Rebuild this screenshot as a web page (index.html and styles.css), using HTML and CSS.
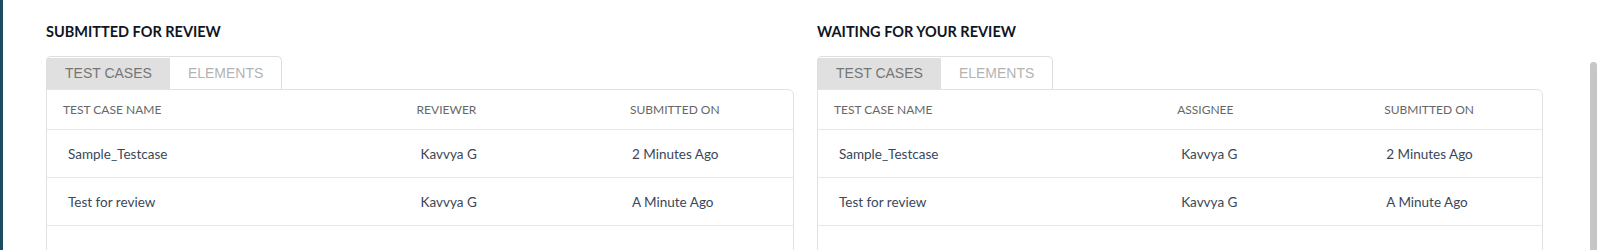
FILE: index.html
```html
<!DOCTYPE html>
<html lang="en">
<head>
  <meta charset="UTF-8">
  <meta name="viewport" content="width=device-width, initial-scale=1.0">
  <title>Reviews</title>
  <link rel="stylesheet" href="styles.css">
</head>
<body>

  <div class="page">
    <div class="review-panels">

      <div class="panel panel-left">
        <h3 class="panel-title">SUBMITTED FOR REVIEW</h3>
        <div class="tabs">
          <a href="javascript:;" class="tab active">TEST CASES</a>
          <a href="javascript:;" class="tab">ELEMENTS</a>
        </div>
        <div class="table-wrap">
          <table class="review-table">
            <colgroup>
              <col class="col-name">
              <col class="col-user">
              <col class="col-date">
            </colgroup>
            <thead>
              <tr>
                <th>TEST CASE NAME</th>
                <th>REVIEWER</th>
                <th>SUBMITTED ON</th>
              </tr>
            </thead>
            <tbody>
              <tr>
                <td>Sample_Testcase</td>
                <td>Kavvya G</td>
                <td>2 Minutes Ago</td>
              </tr>
              <tr>
                <td>Test for review</td>
                <td>Kavvya G</td>
                <td>A Minute Ago</td>
              </tr>
              <tr class="empty">
                <td></td><td></td><td></td>
              </tr>
            </tbody>
          </table>
        </div>
      </div>

      <div class="panel panel-right">
        <h3 class="panel-title">WAITING FOR YOUR REVIEW</h3>
        <div class="tabs">
          <a href="javascript:;" class="tab active">TEST CASES</a>
          <a href="javascript:;" class="tab">ELEMENTS</a>
        </div>
        <div class="table-wrap">
          <table class="review-table">
            <colgroup>
              <col class="col-name">
              <col class="col-user">
              <col class="col-date">
            </colgroup>
            <thead>
              <tr>
                <th>TEST CASE NAME</th>
                <th>ASSIGNEE</th>
                <th>SUBMITTED ON</th>
              </tr>
            </thead>
            <tbody>
              <tr>
                <td>Sample_Testcase</td>
                <td>Kavvya G</td>
                <td>2 Minutes Ago</td>
              </tr>
              <tr>
                <td>Test for review</td>
                <td>Kavvya G</td>
                <td>A Minute Ago</td>
              </tr>
              <tr class="empty">
                <td></td><td></td><td></td>
              </tr>
            </tbody>
          </table>
        </div>
      </div>

    </div>

    <!-- scrollbar thumb of the content area -->
    <div class="scroll-thumb"></div>
  </div>

</body>
</html>
```

FILE: styles.css
```css
html, body {
  margin: 0;
  padding: 0;
  height: 100%;
  overflow: hidden;
  background-color: #fff;
}
a {
  text-decoration: none;
}
.page {
  position: relative;
  height: 100%;
  border-left: 3px solid #1f4b60;
  box-sizing: border-box;
  font-family: Lato, "Open Sans", sans-serif;
}
.review-panels {
  display: flex;
  gap: 23px;
  padding: 22px 0 0 43px;
}
.panel-left {
  width: 748px;
}
.panel-right {
  width: 726px;
}
.panel-title {
  margin: 0 0 14px;
  font-size: 14.5px;
  line-height: 20px;
  font-weight: 700;
  color: #10151f;
}

/* tabs */
.tabs {
  display: inline-flex;
  padding-top: 1px;
  border: 1px solid #dedede;
  border-bottom: none;
  border-radius: 5px 5px 0 0;
  vertical-align: top;
}
.tab {
  display: block;
  height: 31px;
  padding: 0 18px;
  line-height: 31px;
  font-family: "Liberation Sans", Arial, sans-serif;
  font-size: 14px;
  color: #b3b3b3;
}
.tab.active {
  background-color: #e0e0e0;
  color: #757575;
}

/* table */
.table-wrap {
  border: 1px solid #e2e2e2;
  border-radius: 0 6px 0 0;
  overflow: hidden;
}
.review-table {
  width: 100%;
  border-collapse: collapse;
  table-layout: fixed;
}
.col-name {
  width: 47.4%;
}
.col-user {
  width: 28.6%;
}
.review-table th {
  height: 39px;
  padding: 0 0 0 16px;
  text-align: left;
  font-size: 12px;
  font-weight: 400;
  color: #676767;
  border-bottom: 1px solid #e6e6e6;
}
.review-table td {
  height: 47px;
  padding: 0 0 0 20px;
  font-size: 13.5px;
  color: #39475a;
  border-bottom: 1px solid #e6e6e6;
}
.review-table td:first-child {
  padding-left: 21px;
}
.review-table td:last-child {
  padding-left: 18px;
}

.scroll-thumb {
  position: absolute;
  top: 62px;
  left: 1587px;
  width: 7px;
  height: 300px;
  border-radius: 4px;
  background-color: #c6c6c6;
}
```
